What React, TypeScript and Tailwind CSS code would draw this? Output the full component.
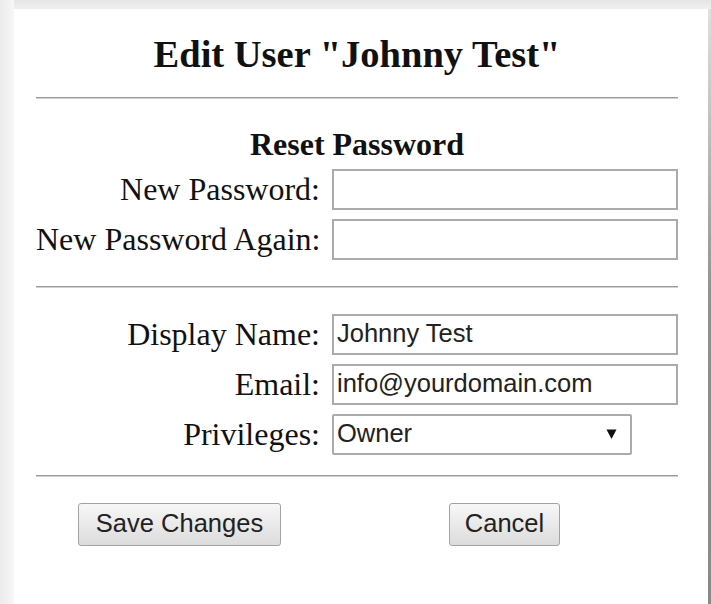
import React from "react";

const serif = { fontFamily: '"Liberation Serif", "Times New Roman", serif' };
const sans = { fontFamily: '"Liberation Sans", Arial, sans-serif' };

function Rule() {
  return <div className="h-[2px] w-full bg-[#9c9c9c] border-b border-[#d0d0d0]" />;
}

function Label({ children }: { children: React.ReactNode }) {
  return (
    <div
      className="w-[286px] pr-[2px] text-right text-[32px] leading-none whitespace-nowrap text-[#111]"
      style={serif}
    >
      {children}
    </div>
  );
}

function Field({ label, value }: { label: string; value?: string }) {
  return (
    <div className="flex items-center h-[41px]">
      <Label>{label}</Label>
      <div className="ml-[10px] w-[346px] h-full border-2 border-[#ababab] bg-white flex items-center pl-[3px]">
        <span className="text-[25.5px] leading-none text-[#222]" style={sans}>
          {value ?? ""}
        </span>
      </div>
    </div>
  );
}

function Button({ children, w }: { children: React.ReactNode; w: string }) {
  return (
    <button
      className={`${w} h-[43px] rounded-[3px] border border-[#a3a3a3] bg-gradient-to-b from-[#f7f7f7] to-[#dcdcdc] text-[25.5px] leading-none text-[#222]`}
      style={sans}
    >
      {children}
    </button>
  );
}

export default function App() {
  return (
    <div className="w-[711px] h-[604px] overflow-hidden bg-[#ececec] flex">
      <div className="w-[14px] shrink-0 bg-gradient-to-r from-[#ebebeb] to-[#f7f7f7]" />
      <div className="flex-1 flex flex-col">
        <div className="h-[9px] shrink-0 bg-gradient-to-b from-[#e6e6e6] to-[#efefef]" />
        <div className="flex-1 flex">
          <div className="w-[694px] bg-white pl-[22px] pr-[30px] pt-[26px]">
            <h1 className="text-center text-[38.5px] leading-none font-bold text-[#111]" style={serif}>
              Edit User "Johnny Test"
            </h1>
            <div className="mt-[23px]">
              <Rule />
            </div>

            <h2 className="mt-[29px] text-center text-[32px] leading-none font-bold text-[#111]" style={serif}>
              Reset Password
            </h2>
            <div className="mt-[9px] flex flex-col gap-[9px]">
              <Field label="New Password:" />
              <Field label="New Password Again:" />
            </div>

            <div className="mt-[26px]">
              <Rule />
            </div>

            <div className="mt-[26px] flex flex-col gap-[9px]">
              <Field label="Display Name:" value="Johnny Test" />
              <Field label="Email:" value="info@yourdomain.com" />
              <div className="flex items-center h-[41px]">
                <Label>Privileges:</Label>
                <div className="ml-[10px] w-[300px] h-full border-2 border-[#ababab] rounded-[2px] bg-white flex items-center pl-[3px] pr-[13px]">
                  <span className="flex-1 text-[25.5px] leading-none text-[#222]" style={sans}>
                    Owner
                  </span>
                  <svg width="11" height="12" viewBox="0 0 11 12">
                    <path d="M0.5 1.5 H10.5 L5.5 11 Z" fill="#111" />
                  </svg>
                </div>
              </div>
            </div>

            <div className="mt-[20px]">
              <Rule />
            </div>

            <div className="mt-[26px] flex items-center pl-[42px]">
              <Button w="w-[203px]">Save Changes</Button>
              <div className="ml-[168px]">
                <Button w="w-[111px]">Cancel</Button>
              </div>
            </div>
          </div>
          <div className="w-[3px] bg-gradient-to-b from-[#e0e0e0] via-[#8f8f8f] to-[#8a8a8a]" />
        </div>
      </div>
    </div>
  );
}
